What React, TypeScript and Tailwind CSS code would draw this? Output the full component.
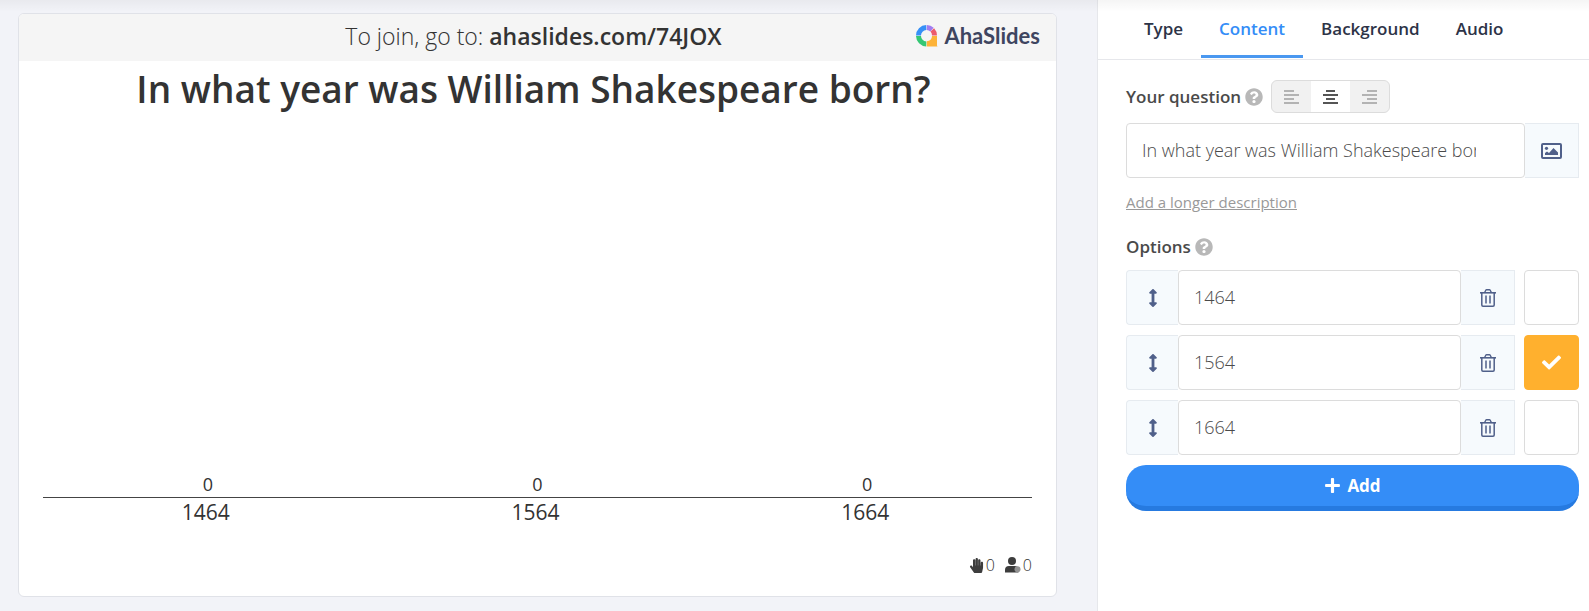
import { useState } from "react";
import { FaArrowsAltV, FaCheck, FaHandPaper, FaPlus, FaQuestionCircle } from "react-icons/fa";

const tabs = ["Type", "Content", "Background", "Audio"];
const question = "In what year was William Shakespeare born?";

const initialOptions = [
  { id: 1, label: "1464", votes: 0, correct: false },
  { id: 2, label: "1564", votes: 0, correct: true },
  { id: 3, label: "1664", votes: 0, correct: false },
];

const alignments = [
  { name: "left", d: "M0 1h10M0 5h15M0 9h10M0 13h15" },
  { name: "center", d: "M3 1h9M0 5h15M3 9h9M0 13h15" },
  { name: "right", d: "M5 1h10M0 5h15M5 9h10M0 13h15" },
];

function LogoMark() {
  return (
    <svg width="22" height="22" viewBox="0 0 22 22" aria-hidden="true">
      <g fill="none" strokeWidth="5">
        <path d="M2.5 10.5A8 8 0 0 1 10.3 2.5" stroke="#3690f7" />
        <path d="M10.8 2.5A8 8 0 0 1 16 4.6" stroke="#a17cf0" />
        <path d="M16.3 4.9A8 8 0 0 1 18.5 10.5" stroke="#ec5b6c" />
        <path d="M2.5 11A8 8 0 0 0 10.3 18.9" stroke="#35c774" />
      </g>
      <path d="M10.8 16.3A5.6 5.6 0 0 0 16 11H21V20.5Q21 21.5 22 21.5H10.8Z" fill="#fdb338" />
    </svg>
  );
}

function ImageIcon() {
  return (
    <svg width="21" height="16" viewBox="0 0 21 16" aria-hidden="true">
      <rect x="1" y="1" width="19" height="14" rx="1" fill="none" stroke="#50608a" strokeWidth="2" />
      <circle cx="5.5" cy="5.3" r="1.6" fill="#50608a" />
      <path d="M4 12V10L6 8.5L8 10L12.5 5L17 9.5V12Z" fill="#50608a" />
    </svg>
  );
}

function TrashIcon() {
  return (
    <svg width="16" height="18" viewBox="0 0 16 18" fill="none" stroke="#50608a" aria-hidden="true">
      <path d="M0 3.8H16" strokeWidth="1.6" />
      <path d="M4.6 3.5L5.8 1.2Q6 0.8 6.5 0.8H9.5Q10 0.8 10.2 1.2L11.4 3.5" strokeWidth="1.4" />
      <path d="M1.8 4V16Q1.8 17.2 3 17.2H13Q14.2 17.2 14.2 16V4" strokeWidth="1.5" />
      <path d="M6 6.5V14.5M10 6.5V14.5" strokeWidth="1.5" />
    </svg>
  );
}

function AudienceIcon() {
  return (
    <svg width="16" height="16" viewBox="0 0 16 16" aria-hidden="true">
      <circle cx="7" cy="4" r="4" fill="#3d3d3d" />
      <path d="M0 15.5V13Q0 9 4 9H10Q13 9 13.5 12V15.5Z" fill="#3d3d3d" />
      <circle cx="12.5" cy="12.2" r="3" fill="#939393" />
    </svg>
  );
}

function Slide() {
  return (
    <section className="flex flex-1 flex-col overflow-hidden rounded-md border border-[#e0e2e8] bg-white text-[#333]">
      <header className="grid h-[47px] shrink-0 grid-cols-[1fr_auto_1fr] items-center bg-[#f5f5f5] pr-4 pb-1 pl-2">
        <span />
        <p className="text-[23px] leading-8 font-light">
          To join, go to: <span className="font-semibold">ahaslides.com/74JOX</span>
        </p>
        <div className="flex items-center justify-end gap-1.5">
          <LogoMark />
          <span className="font-['Lato',sans-serif] text-[22px] leading-6 font-bold text-[#3e4560]">AhaSlides</span>
        </div>
      </header>
      <h1 className="pt-0.5 pr-8 pl-6 text-center text-[37px] leading-[52px] font-semibold">{question}</h1>
      <div className="mx-6 mt-auto grid grid-cols-3 text-center">
        {initialOptions.map((option) => (
          <div key={option.id}>
            <p className="border-b border-[#444] text-[18px] leading-[26px]">{option.votes}</p>
            <p className="pr-1 text-[21px] leading-7">{option.label}</p>
          </div>
        ))}
      </div>
      <footer className="mx-6 mt-6 mb-4 flex items-center justify-end gap-2.5 text-[16px] leading-[30px] font-light">
        <span className="flex items-center gap-0.5">
          <FaHandPaper size={15} color="#3d3d3d" />0
        </span>
        <span className="flex items-center gap-0.5">
          <AudienceIcon />0
        </span>
      </footer>
    </section>
  );
}

function Panel() {
  const [activeTab, setActiveTab] = useState("Content");
  const [align, setAlign] = useState("center");
  const [options, setOptions] = useState(initialOptions);

  const toggle = (id: number) =>
    setOptions(options.map((o) => (o.id === id ? { ...o, correct: !o.correct } : o)));
  const remove = (id: number) => setOptions(options.filter((o) => o.id !== id));
  const rename = (id: number, label: string) =>
    setOptions(options.map((o) => (o.id === id ? { ...o, label } : o)));
  const add = () =>
    setOptions([...options, { id: Date.now(), label: "", votes: 0, correct: false }]);

  return (
    <aside className="w-[492px] shrink-0 border-l border-[#e6e7eb] bg-white text-[#4a4a4a]">
      <nav className="flex h-[60px] border-b border-[#e6e7eb] px-7 pb-px">
        {tabs.map((tab) => (
          <button
            key={tab}
            onClick={() => setActiveTab(tab)}
            className={
              tab === activeTab
                ? "border-b-3 border-[#4a98f0] px-[18px] pt-0.5 text-[17px] font-semibold text-[#348df7]"
                : "border-b-3 border-transparent px-[18px] pt-0.5 text-[17px] font-semibold text-[#2d3347]"
            }
          >
            {tab}
          </button>
        ))}
      </nav>

      <div className="pt-5 pr-[10px] pl-7">
        <div className="flex items-center">
          <label htmlFor="question" className="text-[17px] font-semibold">Your question</label>
          <FaQuestionCircle size={18} color="#b8b8b8" className="ml-1" />
          <div className="ml-2 flex h-[33px] overflow-hidden rounded-md border border-[#dcdcdc] bg-[#f1f1f1]">
            {alignments.map((item) => (
              <button
                key={item.name}
                aria-label={"Align " + item.name}
                onClick={() => setAlign(item.name)}
                className={
                  item.name === align
                    ? "flex w-[39px] items-center justify-center bg-white text-[#555]"
                    : "flex w-[39px] items-center justify-center text-[#b3b3b3]"
                }
              >
                <svg width="15" height="14" viewBox="0 0 15 14" fill="none" stroke="currentColor" strokeWidth="2">
                  <path d={item.d} />
                </svg>
              </button>
            ))}
          </div>
        </div>

        <div className="mt-2.5 flex h-[55px]">
          <input
            id="question"
            defaultValue={question}
            className="min-w-0 flex-1 rounded-sm border border-[#dcdcdc] pr-12 pl-[15px] text-[18px] font-light"
          />
          <button aria-label="Add image" className="flex w-[54px] items-center justify-center border border-l-0 border-[#e6ebf0] bg-[#f6fafd]">
            <ImageIcon />
          </button>
        </div>

        <a href="#description" className="mt-3 block text-[15px] leading-6 text-[#999] underline">
          Add a longer description
        </a>

        <div className="mt-5 mb-2.5 flex items-center gap-1">
          <h2 className="text-[17px] leading-[26px] font-semibold">Options</h2>
          <FaQuestionCircle size={18} color="#b8b8b8" />
        </div>

        <div className="flex flex-col gap-2.5">
          {options.map((option) => (
            <div key={option.id} className="flex h-[55px]">
              <button aria-label="Move option" className="flex w-[52px] items-center justify-center rounded-l-sm border border-r-0 border-[#e6ebf0] bg-[#f6fafd]">
                <FaArrowsAltV size={18} color="#50608a" />
              </button>
              <input
                aria-label="Option text"
                value={option.label}
                onChange={(e) => rename(option.id, e.target.value)}
                className="min-w-0 flex-1 rounded-sm border border-[#dcdcdc] px-[15px] text-[18px] font-light"
              />
              <button
                aria-label="Delete option"
                onClick={() => remove(option.id)}
                className="flex w-[54px] items-center justify-center border border-l-0 border-[#e6ebf0] bg-[#f6fafd]"
              >
                <TrashIcon />
              </button>
              <label className="ml-[9px] grid w-[55px] place-items-center">
                <input
                  type="checkbox"
                  aria-label="Correct answer"
                  checked={option.correct}
                  onChange={() => toggle(option.id)}
                  className="col-start-1 row-start-1 h-full w-full appearance-none rounded-sm border border-[#dcdcdc] bg-white checked:border-[#ffb02e] checked:bg-[#ffb02e]"
                />
                {option.correct && (
                  <FaCheck size={19} color="#fff" className="pointer-events-none z-10 col-start-1 row-start-1" />
                )}
              </label>
            </div>
          ))}
        </div>

        <button
          onClick={add}
          className="mt-2.5 flex h-[46px] w-full items-center justify-center gap-1.5 rounded-[20px] border-b-5 border-[#267ae0] bg-[#348df7] text-[17px] font-bold text-white"
        >
          <FaPlus size={17} />
          Add
        </button>
      </div>
    </aside>
  );
}

export default function App() {
  return (
    <div className="relative flex min-h-screen bg-[#f2f3f8] font-['Open_Sans',sans-serif]">
      <main className="flex min-w-0 flex-1 pt-[13px] pr-10 pb-[14px] pl-[18px]">
        <Slide />
      </main>
      <Panel />
      <div className="pointer-events-none absolute inset-x-0 top-0 h-3 bg-linear-to-b from-black/4 to-transparent" />
    </div>
  );
}
